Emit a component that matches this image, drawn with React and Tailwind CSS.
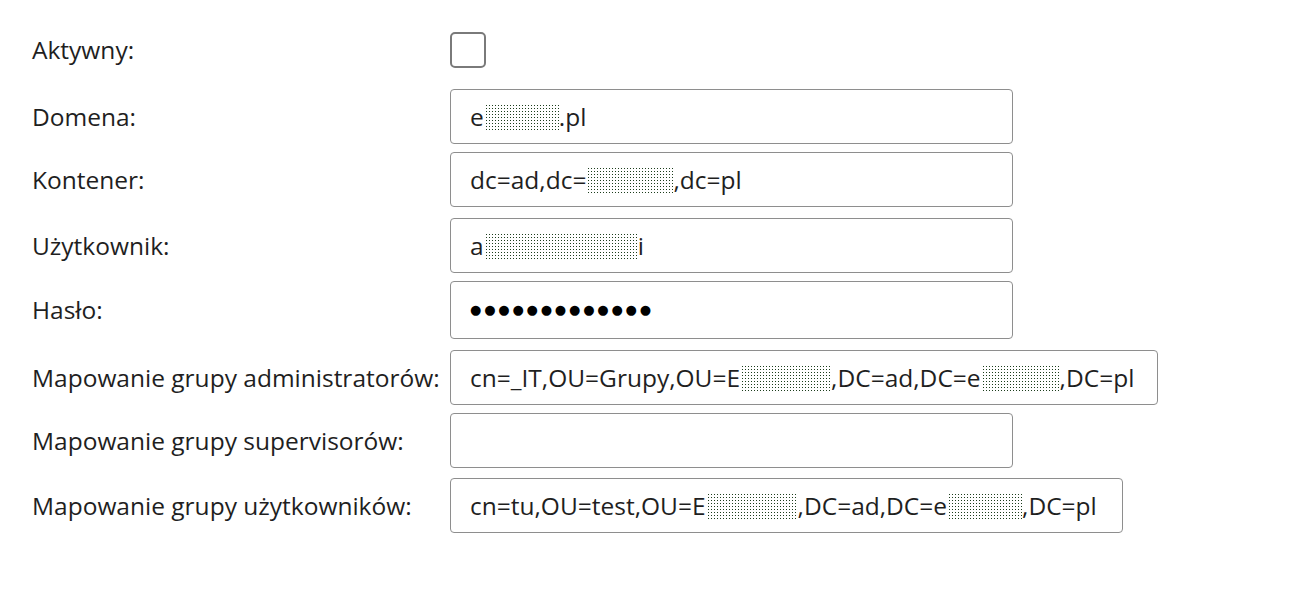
import React from 'react';

const Redacted = ({ w }) => (
  <span
    className="inline-block h-[28px] bg-[linear-gradient(90deg,#fff_2px,transparent_2px),linear-gradient(#fff_2px,#1c3d1c_2px)] bg-[length:3px_3px]"
    style={{ width: w }}
  />
);

const Field = ({ width = 'w-[563px]', children }) => (
  <div className={`${width} h-[55px] flex items-center pl-[19px] pr-2 border-[1.5px] border-[#8e8e8e] rounded-[4px] bg-white whitespace-nowrap overflow-hidden`}>
    {children}
  </div>
);

const Row = ({ label, className = '', children }) => (
  <div className={`flex items-center ${className}`}>
    <div className="w-[418px] shrink-0">{label}</div>
    {children}
  </div>
);

export default function App() {
  return (
    <div className="min-h-screen bg-white pt-[32px] pl-[32px] text-[24.5px] leading-[36px] text-[#1f1f1f] font-['Open_Sans',sans-serif]">
      <Row label="Aktywny:">
        <div className="w-[36px] h-[36px] border-2 border-[#7a7a7a] rounded-[5px] bg-white" />
      </Row>

      <Row label="Domena:" className="mt-[21px]">
        <Field>
          <span>e</span>
          <Redacted w={75} />
          <span>.pl</span>
        </Field>
      </Row>

      <Row label="Kontener:" className="mt-[8px]">
        <Field>
          <span>dc=ad,dc=</span>
          <Redacted w={87} />
          <span>,dc=pl</span>
        </Field>
      </Row>

      <Row label="Użytkownik:" className="mt-[11px]">
        <Field>
          <span>a</span>
          <Redacted w={154} />
          <span>i</span>
        </Field>
      </Row>

      <Row label="Hasło:" className="mt-[8px]">
        <Field width="w-[563px] h-[58px]">
          <span className="font-['DejaVu_Sans',sans-serif] text-[13px] tracking-[2.8px] text-black">
            ●●●●●●●●●●●●●
          </span>
        </Field>
      </Row>

      <Row label="Mapowanie grupy administratorów:" className="mt-[11px]">
        <Field width="w-[708px]">
          <span>cn=_IT,OU=Grupy,OU=E</span>
          <Redacted w={91} />
          <span>,DC=ad,DC=e</span>
          <Redacted w={79} />
          <span>,DC=pl</span>
        </Field>
      </Row>

      <Row label="Mapowanie grupy supervisorów:" className="mt-[8px]">
        <Field />
      </Row>

      <Row label="Mapowanie grupy użytkowników:" className="mt-[10px]">
        <Field width="w-[673px]">
          <span>cn=tu,OU=test,OU=E</span>
          <Redacted w={92} />
          <span>,DC=ad,DC=e</span>
          <Redacted w={75} />
          <span>,DC=pl</span>
        </Field>
      </Row>
    </div>
  );
}
